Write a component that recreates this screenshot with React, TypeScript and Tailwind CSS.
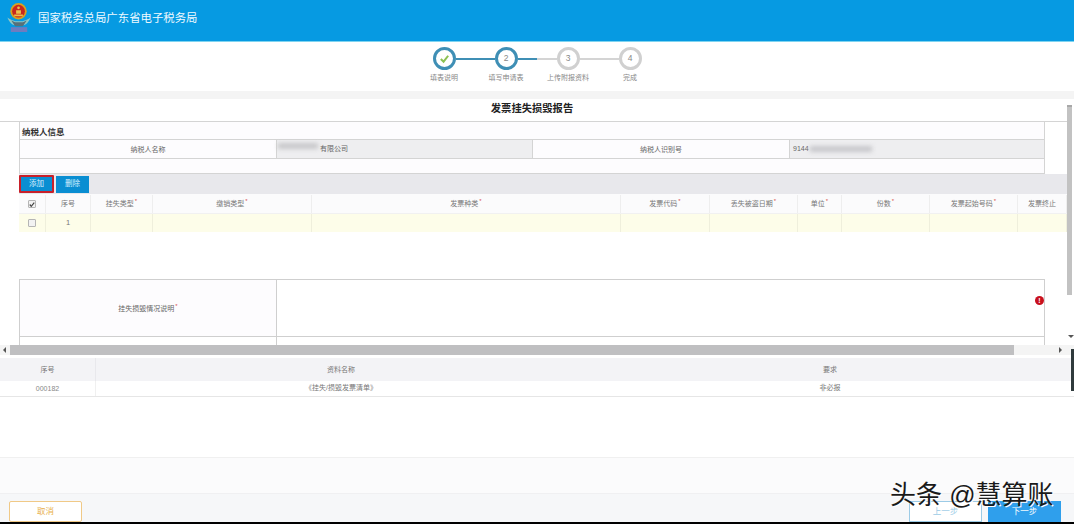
const font = "[font-family:'Liberation_Sans','Noto_Sans_CJK_SC',sans-serif]"

const steps = [
  { label: '填表说明', n: '', left: 'bg-transparent', right: 'bg-[#3f8fb5]', ring: 'border-[#3f8fb5]' },
  { label: '填写申请表', n: '2', left: 'bg-[#3f8fb5]', right: 'bg-[#3f8fb5]', ring: 'border-[#3f8fb5]' },
  { label: '上传附报资料', n: '3', left: 'bg-[#d4d4d4]', right: 'bg-[#d4d4d4]', ring: 'border-[#d0d0d0]' },
  { label: '完成', n: '4', left: 'bg-[#d4d4d4]', right: 'bg-transparent', ring: 'border-[#d0d0d0]' },
]

const columns = [
  { w: 'w-[27px]', label: '' },
  { w: 'w-[45px]', label: '序号' },
  { w: 'w-[62px]', label: '挂失类型', star: true },
  { w: 'w-[159px]', label: '缴销类型', star: true },
  { w: 'w-[309px]', label: '发票种类', star: true },
  { w: 'w-[89px]', label: '发票代码', star: true },
  { w: 'w-[88px]', label: '丢失被盗日期', star: true },
  { w: 'w-[44px]', label: '单位', star: true },
  { w: 'w-[88px]', label: '份数', star: true },
  { w: 'w-[88px]', label: '发票起始号码', star: true },
  { w: 'w-[49px]', label: '发票终止', star: false },
]

function Emblem() {
  return (
    <svg viewBox="0 0 24 30" className="h-[29px] w-[24px] shrink-0">
      <path d="M0 15c4 3 7 3 8 4h8c1-1 4-1 8-4-2 5-5 8-8 8H8c-3 0-6-3-8-8z" fill="#8fc7c4" />
      <path d="M4 18l4 6h8l4-6-4 2H8z" fill="#56707a" />
      <circle cx="11.5" cy="8.5" r="8.5" fill="#d9a21f" />
      <circle cx="11.5" cy="8.5" r="6.6" fill="#c8281e" />
      <path d="M7 12h9v1.6H7zM9 7.5h5v3.5H9z" fill="#eac04a" />
      <circle cx="11.5" cy="5" r="1.4" fill="#eac04a" />
      <rect x="3.5" y="25" width="17" height="5" fill="#9d6fb0" opacity="0.7" />
    </svg>
  )
}

function Star() {
  return <sup className="ml-[1px] text-[6px] text-[#d9534f]">*</sup>
}

function Check({ on }: { on?: boolean }) {
  return (
    <div className="flex h-[8px] w-[8px] items-center justify-center rounded-[1px] border border-[#b5b5b5] bg-[#f2f2f2]">
      {on && (
        <svg viewBox="0 0 8 8" className="h-[7px] w-[7px]">
          <path d="M1 4l2 2.4L7 1.5" fill="none" stroke="#444" strokeWidth="1.6" />
        </svg>
      )}
    </div>
  )
}

export default function App() {
  return (
    <div className={`${font} relative flex h-[524px] w-[1074px] flex-col overflow-hidden bg-white text-[#666]`}>
      {/* Top bar */}
      <header className="flex h-[42px] shrink-0 items-start gap-[7px] border-b border-[#7fd4f0] bg-[#069ae2] pl-[7px] pt-[3px]">
        <Emblem />
        <h1 className="mt-[7px] text-[11.4px] leading-[16px] text-[#eef9ff]">国家税务总局广东省电子税务局</h1>
      </header>

      {/* Steps */}
      <div className="flex h-[49px] shrink-0 justify-center pt-[5px]">
        {steps.map((s) => (
          <div key={s.label} className="flex w-[62px] flex-col items-center">
            <div className="flex w-full items-center">
              <div className={`h-[2px] flex-1 ${s.left}`} />
              <div className={`flex h-[23px] w-[23px] items-center justify-center rounded-full border-[3px] bg-white text-[8.5px] text-[#888] ${s.ring}`}>
                {s.n || (
                  <svg viewBox="0 0 12 12" className="h-[11px] w-[11px]">
                    <path d="M2 6.5l3 3 5-6.5" fill="none" stroke="#8cc152" strokeWidth="2.2" />
                  </svg>
                )}
              </div>
              <div className={`h-[2px] flex-1 ${s.right}`} />
            </div>
            <span className="mt-[3px] whitespace-nowrap text-[7px] leading-[10px] text-[#888]">{s.label}</span>
          </div>
        ))}
      </div>

      <div className="h-[8px] shrink-0 bg-[#f4f4f4]" />

      {/* Scrolling form */}
      <div className="flex h-[246px] shrink-0">
        <div className="w-[1067px] shrink-0 overflow-hidden">
          <div className="h-[23px] border-b border-[#d4d4d4] pr-[3px] pt-[1px] text-center text-[10.3px] font-bold leading-[18px] text-[#222]">
            发票挂失损毁报告
          </div>

          <div className="ml-[19px] w-[1026px] border-x border-[#d4d4d4] bg-[#fdfcfe]">
            <div className="h-[18px] border-b border-[#d4d4d4] pl-[2px] pt-[1px] text-[8.5px] font-bold leading-[18px] text-[#333]">
              纳税人信息
            </div>
            <div className="flex h-[19px] border-b border-[#d4d4d4] pt-0 text-[7px] leading-[20px] text-[#666]">
              <div className="w-[257px] border-r border-[#d4d4d4] text-center">纳税人名称</div>
              <div className="flex w-[256px] items-center border-r border-[#d4d4d4] bg-[#eeeef0]">
                <div className="-mt-[6px] ml-[1px] h-[6px] w-[40px] bg-[#c8c8ca] blur-[2px]" />
                <span className="ml-[2px]">有限公司</span>
              </div>
              <div className="w-[257px] border-r border-[#d4d4d4] text-center">纳税人识别号</div>
              <div className="flex flex-1 items-center bg-[#eeeef0] pl-[3px]">
                <span>9144</span>
                <div className="ml-[1px] h-[6px] w-[62px] bg-[#c8c8cc] blur-[2px]" />
              </div>
            </div>
            <div className="h-[15px] border-b border-[#d4d4d4]" />
          </div>

          <div className="ml-[19px] flex h-[20px] w-[1048px] items-center gap-[2px] bg-[#e8e8ec]">
            <button className="h-[18px] w-[35px] rounded-[1px] border-2 border-[#c8202a] bg-[#0a8ed2] text-[7.5px] text-[#d8f0ff]">添加</button>
            <button className="h-[17px] w-[33px] bg-[#0a8ed2] text-[7.5px] text-[#d8f0ff]">删除</button>
          </div>

          <div className="ml-[19px] flex h-[20px] w-[1048px] overflow-hidden border-b border-[#f1f1f1] bg-[#fbfbfc] pt-[1px] text-[7px] text-[#777]">
            {columns.map((c, i) => (
              <div key={i} className={`${c.w} flex shrink-0 items-center justify-center whitespace-nowrap border-r border-[#eeeeee]`}>
                {i === 0 ? (
                  <Check on />
                ) : (
                  <>
                    {c.label}
                    {c.star && <Star />}
                  </>
                )}
              </div>
            ))}
          </div>
          <div className="ml-[19px] flex h-[18px] w-[1048px] overflow-hidden bg-[#fdfde9] text-[7.5px] leading-[18px] text-[#777]">
            {columns.map((c, i) => (
              <div key={i} className={`${c.w} flex shrink-0 items-center justify-center border-r border-[#efefdc]`}>
                {i === 0 && <Check />}
                {i === 1 && '1'}
              </div>
            ))}
          </div>

          <div className="h-[47px]" />

          <div className="ml-[19px] w-[1026px] border-x border-t border-[#cfcfcf]">
            <div className="flex h-[57px] border-b border-[#cfcfcf]">
              <div className="flex w-[257px] items-center justify-center border-r border-[#cfcfcf] bg-[#fdfcfe] pt-[2px] text-[7px] text-[#666]">
                挂失损毁情况说明
                <Star />
              </div>
              <div className="flex flex-1 items-center justify-end pb-[16px]">
                <span className="flex h-[9px] w-[9px] items-center justify-center rounded-full bg-[#c8101e] text-[7px] font-bold leading-none text-white">!</span>
              </div>
            </div>
            <div className="flex h-[9px]">
              <div className="w-[257px] border-r border-[#cfcfcf]" />
            </div>
          </div>
        </div>

        {/* Vertical scrollbar */}
        <div className="flex w-[7px] shrink-0 flex-col pt-[6px]">
          <div className="h-[190px] w-[5px] border-t-2 border-[#a8a8a8] bg-[#c2c2c2]" />
          <div className="flex-1" />
          <div className="mb-[7px] h-0 w-0 self-center border-x-[3px] border-t-[3px] border-x-transparent border-t-[#555]" />
        </div>
      </div>

      {/* Horizontal scrollbar */}
      <div className="flex h-[10px] shrink-0 items-center bg-[#f4f4f4]">
        <div className="ml-[3px] h-0 w-0 border-y-[3px] border-r-[3px] border-y-transparent border-r-[#555]" />
        <div className="ml-[4px] h-[10px] w-[1004px] bg-[#bfbfc1]" />
        <div className="ml-[45px] h-0 w-0 border-y-[3px] border-l-[3px] border-y-transparent border-l-[#555]" />
      </div>

      {/* Attachments table */}
      <div className="shrink-0 pt-[3px] text-[7px] text-[#777]">
        <div className="flex h-[23px] items-center bg-[#f3f3f6]">
          <div className="w-[96px] border-r border-[#e8e8ec] pt-[1px] text-center leading-[22px]">序号</div>
          <div className="w-[490px] pt-[1px] text-center leading-[22px]">资料名称</div>
          <div className="flex-1 pt-[1px] text-center">要求</div>
        </div>
        <div className="flex h-[16px] items-center border-b border-[#e6e6e6]">
          <div className="w-[96px] border-r border-[#f0f0f0] text-center leading-[15px] text-[#888]">000182</div>
          <div className="w-[490px] text-center">《挂失/损毁发票清单》</div>
          <div className="flex-1 text-center">非必报</div>
        </div>
      </div>

      <div className="h-[61px] shrink-0 border-b border-[#f0f0f0]" />
      <div className="h-[36px] shrink-0 border-b border-[#f0f0f2] bg-[#fbfbfc]" />

      {/* Footer actions */}
      <footer className="flex h-[28px] shrink-0 items-end bg-[#f6f7f9] pl-[9px] pr-[13px]">
        <button className="h-[21px] w-[73px] rounded-[2px] border border-[#f0c987] bg-white text-[8.5px] text-[#e8b04e]">取消</button>
        <button className="ml-auto h-[21px] w-[73px] border border-[#9ccbe6] bg-white text-[8.5px] text-[#9ccbe6]">上一步</button>
        <button className="ml-[6px] h-[21px] w-[73px] bg-[#2f9fec] text-[8.5px] text-white">下一步</button>
      </footer>
      <div className="h-[2px] shrink-0 bg-black" />

      {/* Dark strip at the right edge, over the page */}
      <div className="absolute left-[1071px] top-[349px] h-[42px] w-[3px] bg-[#2f3a3c]" />

      {/* Watermark */}
      <div className="absolute left-[890px] top-[478px] whitespace-nowrap text-[26px] leading-[34px] text-[#1a1a1a] [text-shadow:1px_1px_0_#fff]">
        头条 @慧算账
      </div>
    </div>
  )
}
